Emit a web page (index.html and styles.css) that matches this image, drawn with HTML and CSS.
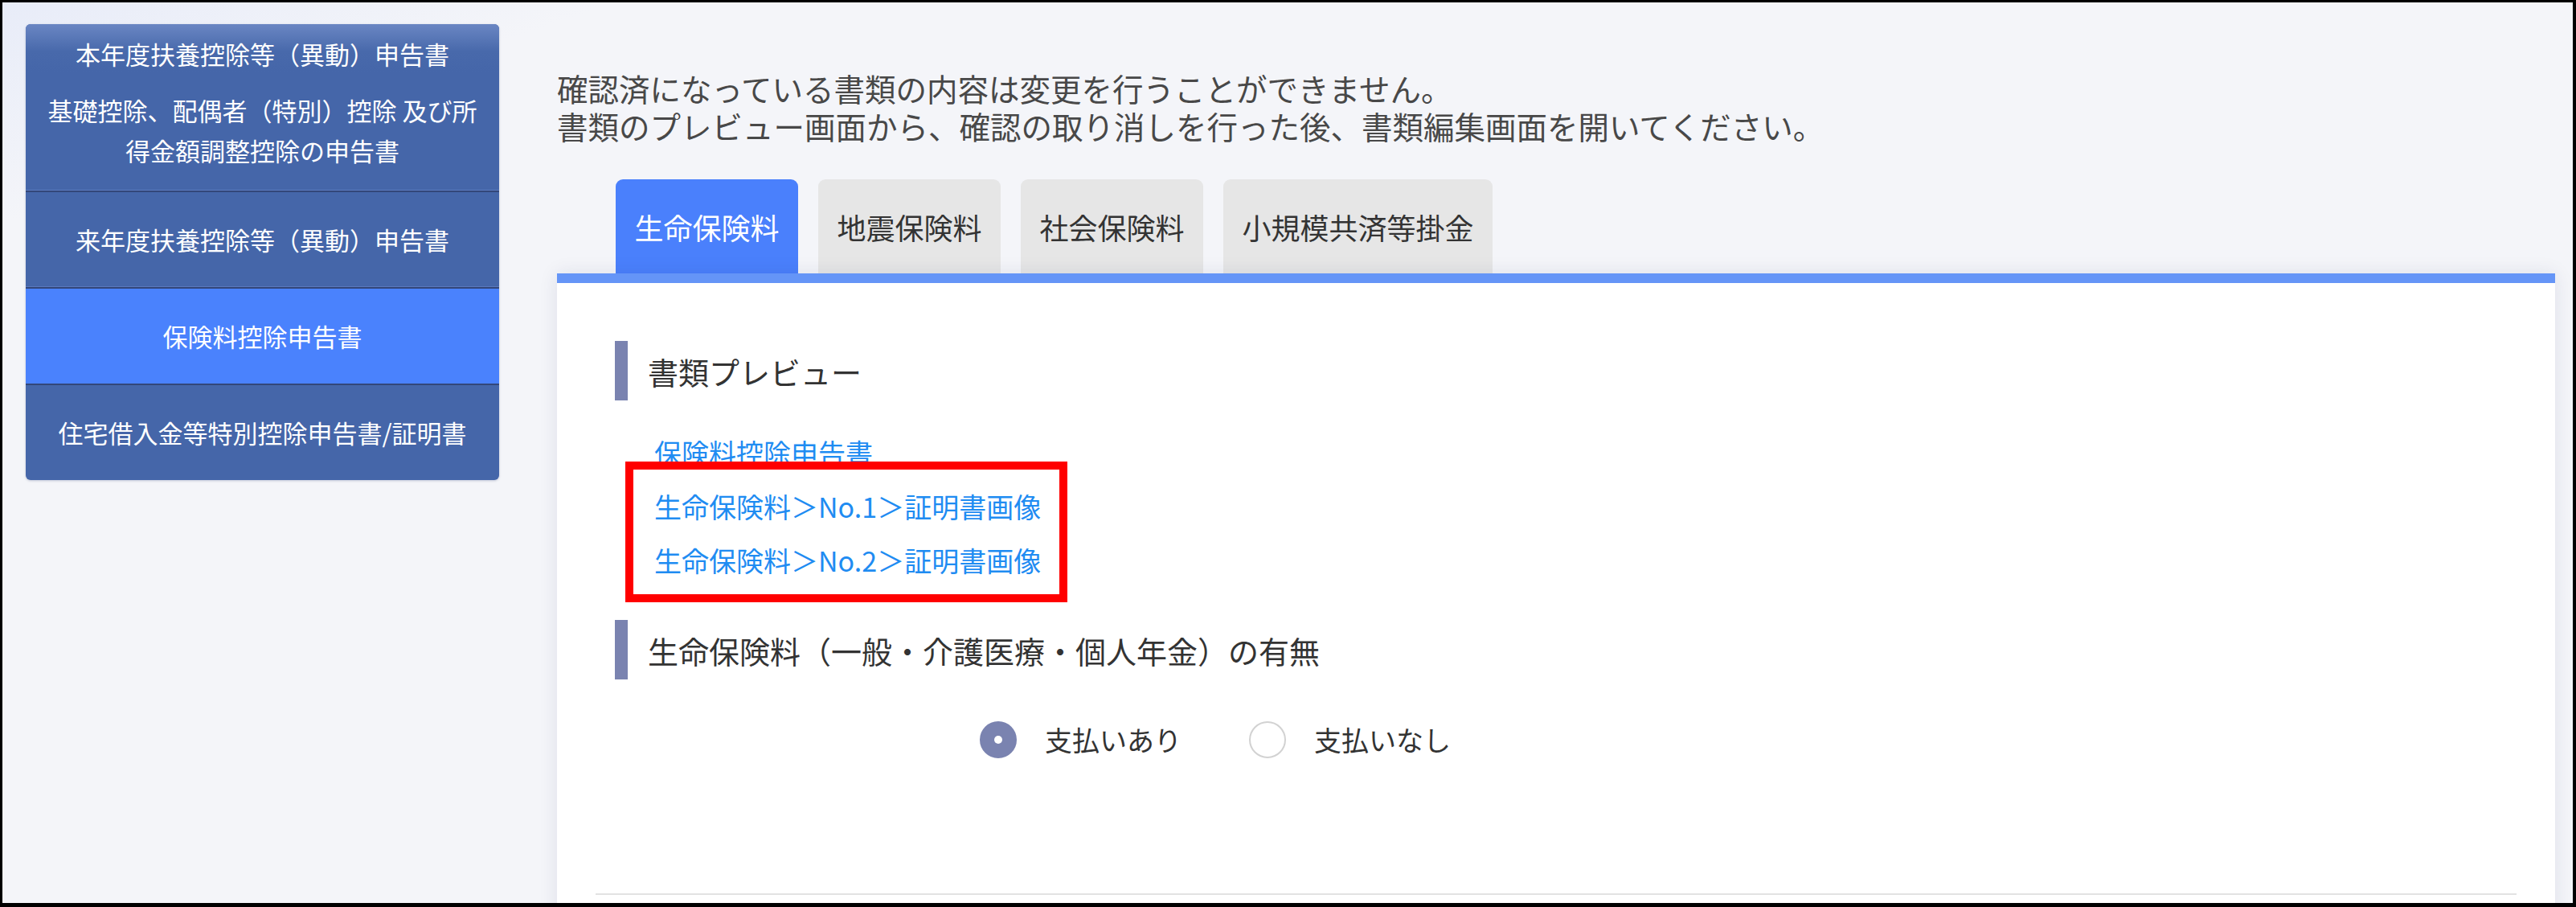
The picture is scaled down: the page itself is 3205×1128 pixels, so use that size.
FILE: index.html
```html
<!DOCTYPE html>
<html lang="ja">
<head>
<meta charset="utf-8">
<title>保険料控除申告書</title>
<link rel="stylesheet" href="styles.css">
</head>
<body>
<div class="frame">
  <aside class="sidebar">
    <div class="nav-group">
      <a class="nav-link">本年度扶養控除等（異動）申告書</a>
      <a class="nav-link">基礎控除、配偶者（特別）控除 及び所得金額調整控除の申告書</a>
    </div>
    <a class="nav-item">来年度扶養控除等（異動）申告書</a>
    <a class="nav-item active">保険料控除申告書</a>
    <a class="nav-item">住宅借入金等特別控除申告書/証明書</a>
  </aside>
  <main class="main">
    <p class="notice">確認済になっている書類の内容は変更を行うことができません。<br>書類のプレビュー画面から、確認の取り消しを行った後、書類編集画面を開いてください。</p>
    <div class="tabs">
      <div class="tab active">生命保険料</div>
      <div class="tab">地震保険料</div>
      <div class="tab">社会保険料</div>
      <div class="tab">小規模共済等掛金</div>
    </div>
    <section class="card">
      <div class="section">
        <h2 class="sec-title">書類プレビュー</h2>
        <div class="links">
          <a class="doc-link">保険料控除申告書</a>
          <a class="doc-link">生命保険料＞No.1＞証明書画像</a>
          <a class="doc-link">生命保険料＞No.2＞証明書画像</a>
          <div class="highlight"></div>
        </div>
        <h2 class="sec-title second">生命保険料（一般・介護医療・個人年金）の有無</h2>
        <div class="radios">
          <label class="radio-opt"><span class="radio checked"></span><span class="radio-label">支払いあり</span></label>
          <label class="radio-opt"><span class="radio"></span><span class="radio-label">支払いなし</span></label>
        </div>
      </div>
      <div class="divider"></div>
    </section>
  </main>
</div>
</body>
</html>
```
FILE: styles.css
```css
html, body {
  margin: 0;
  padding: 0;
}
body {
  font-family: "Noto Sans CJK JP", "Noto Sans", sans-serif;
  background: #ffffff;
}
.frame {
  box-sizing: border-box;
  width: 3205px;
  height: 1128px;
  border-style: solid;
  border-color: #000;
  border-width: 3px 4px 5px 3px;
  background: linear-gradient(160deg, #e8ecf8 0px, #f4f5f9 260px);
  display: flex;
  align-items: flex-start;
  gap: 72px;
  padding: 27px 22px 0 29px;
  overflow: hidden;
}
.sidebar {
  flex: 0 0 589px;
  width: 589px;
  background: #4566a9;
  border-radius: 6px;
  overflow: hidden;
  box-shadow: 0 1px 3px rgba(40, 60, 110, 0.25);
  display: flex;
  flex-direction: column;
}
.nav-group {
  padding: 12px 16px 25px;
  background: linear-gradient(#6a86c3 0px, #4869ab 34px, #4566a9 60px);
  display: flex;
  flex-direction: column;
  gap: 20px;
  box-shadow: inset 0 -1px 0 #5c7cc0;
}
.nav-link, .nav-item {
  color: #ffffff;
  font-size: 31px;
  line-height: 50px;
  text-align: center;
  display: block;
  text-decoration: none;
}
.nav-item {
  box-sizing: border-box;
  height: 120px;
  border-top: 2px solid #33477a;
  display: flex;
  align-items: center;
  justify-content: center;
  box-shadow: inset 0 -1px 0 #5a79bd;
}
.nav-item:last-child {
  box-shadow: none;
}
.nav-item.active {
  background: #4a82fd;
  box-shadow: none;
}
.main {
  flex: 1;
  min-width: 0;
  display: flex;
  flex-direction: column;
}
.notice {
  margin: 56px 0 0;
  font-size: 38.5px;
  line-height: 47px;
  color: #484848;
}
.tabs {
  display: flex;
  gap: 25px;
  margin: 43px 0 0 73px;
}
.tab {
  height: 117px;
  padding: 0 23.5px;
  display: flex;
  align-items: center;
  font-size: 36px;
  color: #333;
  background: #e6e6e6;
  border-radius: 9px 9px 0 0;
}
.tab.active {
  background: #4a80fc;
  color: #fff;
}
.card {
  background: #fff;
  border-top: 12px solid #6595f7;
  box-shadow: 0 0 22px rgba(30, 40, 90, 0.10);
  padding: 72px 48px 0;
  min-height: 900px;
}
.section {
  padding-left: 24px;
}
.sec-title {
  margin: 0;
  height: 74px;
  box-sizing: border-box;
  border-left: 16px solid #7a83b0;
  padding-left: 25px;
  display: flex;
  align-items: center;
  font-size: 38px;
  font-weight: normal;
  color: #333;
}
.sec-title.second {
  margin-top: 41px;
}
.links {
  position: relative;
  margin: 31px 0 0 49px;
  display: flex;
  flex-direction: column;
}
.doc-link {
  font-size: 34px;
  line-height: 67px;
  color: #1f8cf2;
  text-decoration: none;
}
.highlight {
  position: absolute;
  left: -36px;
  top: 45px;
  width: 550px;
  height: 175px;
  box-sizing: border-box;
  border: 10px solid #ff0000;
}
.radios {
  display: flex;
  align-items: center;
  gap: 84px;
  margin-top: 50px;
  padding-left: 454px;
}
.radio-opt {
  display: flex;
  align-items: center;
  gap: 35px;
}
.radio {
  box-sizing: border-box;
  width: 46px;
  height: 46px;
  border-radius: 50%;
  border: 2px solid #d2d2d2;
  background: #fff;
  display: flex;
  align-items: center;
  justify-content: center;
}
.radio.checked {
  background: #7a83b0;
  border-color: #7a83b0;
}
.radio.checked::after {
  content: "";
  width: 10px;
  height: 10px;
  border-radius: 50%;
  background: #fff;
}
.radio-label {
  font-size: 34px;
  color: #333;
}
.divider {
  margin-top: 167px;
  height: 2px;
  background: #e2e2e2;
}
```
